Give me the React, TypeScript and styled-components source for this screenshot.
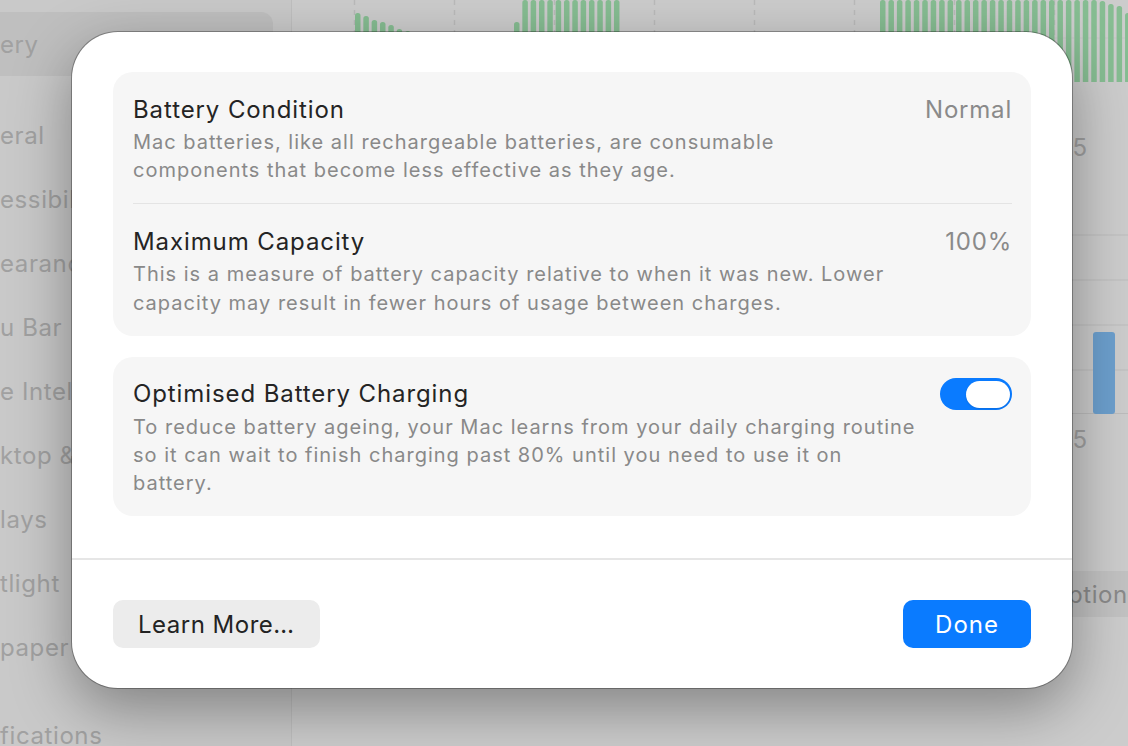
import React from "react";
import styled, { createGlobalStyle } from "styled-components";

const GlobalStyle = createGlobalStyle`
  html, body { margin: 0; padding: 0; width: 1128px; height: 746px; overflow: hidden; background: #cbcbcb; }
  body { font-family: Inter, "Noto Sans", sans-serif; -webkit-font-smoothing: antialiased; }
  * { box-sizing: border-box; }
`;

const Screen = styled.div`
  position: relative;
  width: 1128px;
  height: 746px;
  overflow: hidden;
  display: flex;
  background: #cccccc;
`;

const Sidebar = styled.nav`
  width: 292px;
  flex: none;
  background: #c9c9c9;
  border-right: 1px solid #bfbfbf;
  padding-top: 12px;
  display: flex;
  flex-direction: column;
`;

const SideItem = styled.div<{ $selected?: boolean; $gap?: number }>`
  height: 64px;
  width: 273px;
  flex: none;
  display: flex;
  align-items: center;
  margin-top: ${(p) => p.$gap ?? 0}px;
  border-radius: 0 12px 12px 0;
  background: ${(p) => (p.$selected ? "#bfbfbf" : "transparent")};
  color: #a1a1a1;
  font-size: 24px;
  letter-spacing: 0.6px;
  white-space: nowrap;
`;

const Main = styled.main`
  flex: 1;
  min-width: 0;
  display: flex;
  flex-direction: column;
  overflow: hidden;
`;

const ChartSvg = styled.svg`
  display: block;
  flex: none;
`;

const AxisRow = styled.div<{ $top: number; $height: number }>`
  height: ${(p) => p.$height}px;
  flex: none;
  padding-top: ${(p) => p.$top}px;
  padding-right: 41px;
  display: flex;
  justify-content: flex-end;
  align-items: flex-start;
  font-size: 24px;
  line-height: 28px;
  color: #a0a0a0;
`;

const OptionsRow = styled.div`
  margin-top: auto;
  margin-bottom: 129px;
  height: 46px;
  flex: none;
  display: flex;
  padding-left: 737px;
`;

const OptionsButton = styled.div`
  flex: none;
  height: 46px;
  border-radius: 10px;
  background: #c2c2c2;
  padding: 0 20px;
  display: flex;
  align-items: center;
  font-size: 24px;
  letter-spacing: 0.6px;
  color: #8a8a8a;
  white-space: nowrap;
`;

const Sheet = styled.div`
  position: absolute;
  left: 72px;
  top: 32px;
  width: 1000px;
  background: #ffffff;
  border-radius: 46px;
  box-shadow: 0 0 0 1px rgba(0, 0, 0, 0.3), 0 20px 60px rgba(0, 0, 0, 0.36);
  display: flex;
  flex-direction: column;
  overflow: hidden;
`;

const SheetBody = styled.div`
  padding: 40px 41px 42px;
  display: flex;
  flex-direction: column;
  gap: 21px;
`;

const Group = styled.section`
  background: #f6f6f6;
  border-radius: 20px;
  padding: 0 19px 0 20px;
`;

const Row = styled.div`
  display: flex;
  align-items: flex-start;
  gap: 24px;
  padding: 22.5px 0 18.5px;
  & + & {
    border-top: 1px solid #e4e4e4;
  }
`;

const RowText = styled.div`
  flex: 1;
  min-width: 0;
`;

const Title = styled.div`
  font-size: 24px;
  line-height: 30px;
  color: #242424;
  letter-spacing: 0.9px;
`;

const Desc = styled.div`
  margin-top: 3.5px;
  font-size: 20px;
  line-height: 28.4px;
  color: #898989;
  letter-spacing: 1px;
  white-space: nowrap;
`;

const Value = styled.div`
  font-size: 24px;
  line-height: 30px;
  color: #8a8a8a;
  letter-spacing: 0.8px;
  white-space: nowrap;
`;

const Toggle = styled.div<{ $on: boolean }>`
  width: 72px;
  height: 32px;
  margin-top: -1px;
  border-radius: 16px;
  background: ${(p) => (p.$on ? "#0a7bff" : "#e0e0e0")};
  display: flex;
  align-items: center;
  justify-content: ${(p) => (p.$on ? "flex-end" : "flex-start")};
  padding: 0 2.5px;
  flex: none;
`;

const Knob = styled.div`
  width: 44px;
  height: 27px;
  border-radius: 14px;
  background: #ffffff;
  box-shadow: 0 1px 2px rgba(0, 0, 0, 0.12);
`;

const Separator = styled.div`
  height: 2px;
  background: #e6e6e6;
`;

const Footer = styled.div`
  padding: 40px 41px 40px;
  display: flex;
  justify-content: space-between;
  align-items: center;
`;

const Button = styled.button<{ $primary?: boolean }>`
  height: 48px;
  border: none;
  border-radius: 10px;
  padding: 0 ${(p) => (p.$primary ? 32 : 25)}px;
  font-family: Inter, "Noto Sans", sans-serif;
  font-size: 24px;
  letter-spacing: ${(p) => (p.$primary ? 1 : 0.5)}px;
  background: ${(p) => (p.$primary ? "#0a7bff" : "#ececec")};
  color: ${(p) => (p.$primary ? "#ffffff" : "#232323")};
`;

const sideItems: { label: string; gap?: number; selected?: boolean }[] = [
  { label: "ery", selected: true },
  { label: "eral", gap: 27 },
  { label: "essibility" },
  { label: "earance" },
  { label: "u Bar" },
  { label: "e Intelligence" },
  { label: "ktop & Dock" },
  { label: "lays" },
  { label: "tlight" },
  { label: "paper" },
  { label: "fications", gap: 24 },
];

const OFF = 292;
type Bar = { x: number; top: number };
const bars: Bar[] = [];
[13, 16, 20, 22, 25, 29, 31, 34].forEach((t, i) => bars.push({ x: 355 + i * 8.33, top: t }));
bars.push({ x: 514, top: 22 });
for (let i = 1; i < 13; i++) bars.push({ x: 514 + i * 8.33, top: 0 });
const tailC = [1, 4, 6, 13];
for (let i = 0; i < 30; i++) {
  const top = i < 26 ? 0 : tailC[i - 26];
  bars.push({ x: 880 + i * 8.45, top });
}

function UsageTop() {
  return (
    <ChartSvg width={836} height={82} viewBox="0 0 836 82">
      <line x1={0} y1={38} x2={836} y2={38} stroke="#c4c4c4" strokeWidth={1} />
      {[354, 454, 554, 654, 754, 854, 954, 1054].map((x) => (
        <line key={x} x1={x - OFF + 0.5} y1={0} x2={x - OFF + 0.5} y2={82} stroke="#bababa" strokeWidth={1.5} strokeDasharray="5 5" />
      ))}
      {bars.map((b, i) => (
        <rect key={i} x={b.x - OFF} y={b.top} width={5.5} height={82 - b.top + 3} rx={2.5} fill="#86bd92" />
      ))}
    </ChartSvg>
  );
}

function UsageBottom() {
  return (
    <ChartSvg width={836} height={200} viewBox="0 0 836 200">
      {[21, 66, 111, 156, 199.5].map((y) => (
        <line key={y} x1={0} y1={y} x2={836} y2={y} stroke="#bcbcbc" strokeWidth={1.2} />
      ))}
      <rect x={1093 - OFF} y={118} width={22} height={82} rx={3} fill="#6c9fcd" />
    </ChartSvg>
  );
}

export default function App() {
  return (
    <>
      <GlobalStyle />
      <Screen>
        <Sidebar>
          {sideItems.map((s) => (
            <SideItem key={s.label} $selected={s.selected} $gap={s.gap}>
              {s.label}
            </SideItem>
          ))}
        </Sidebar>
        <Main>
          <UsageTop />
          <AxisRow $top={52} $height={132}>5</AxisRow>
          <UsageBottom />
          <AxisRow $top={12} $height={52}>5</AxisRow>
          <OptionsRow>
            <OptionsButton>Options…</OptionsButton>
          </OptionsRow>
        </Main>

        <Sheet role="dialog" aria-label="Battery Health">
          <SheetBody>
            <Group>
              <Row>
                <RowText>
                  <Title>Battery Condition</Title>
                  <Desc>
                    Mac batteries, like all rechargeable batteries, are consumable
                    <br />
                    components that become less effective as they age.
                  </Desc>
                </RowText>
                <Value>Normal</Value>
              </Row>
              <Row>
                <RowText>
                  <Title>Maximum Capacity</Title>
                  <Desc>
                    This is a measure of battery capacity relative to when it was new. Lower
                    <br />
                    capacity may result in fewer hours of usage between charges.
                  </Desc>
                </RowText>
                <Value>100%</Value>
              </Row>
            </Group>
            <Group>
              <Row>
                <RowText>
                  <Title>Optimised Battery Charging</Title>
                  <Desc>
                    To reduce battery ageing, your Mac learns from your daily charging routine
                    <br />
                    so it can wait to finish charging past 80% until you need to use it on
                    <br />
                    battery.
                  </Desc>
                </RowText>
                <Toggle $on>
                  <Knob />
                </Toggle>
              </Row>
            </Group>
          </SheetBody>
          <Separator />
          <Footer>
            <Button>Learn More…</Button>
            <Button $primary>Done</Button>
          </Footer>
        </Sheet>
      </Screen>
    </>
  );
}
